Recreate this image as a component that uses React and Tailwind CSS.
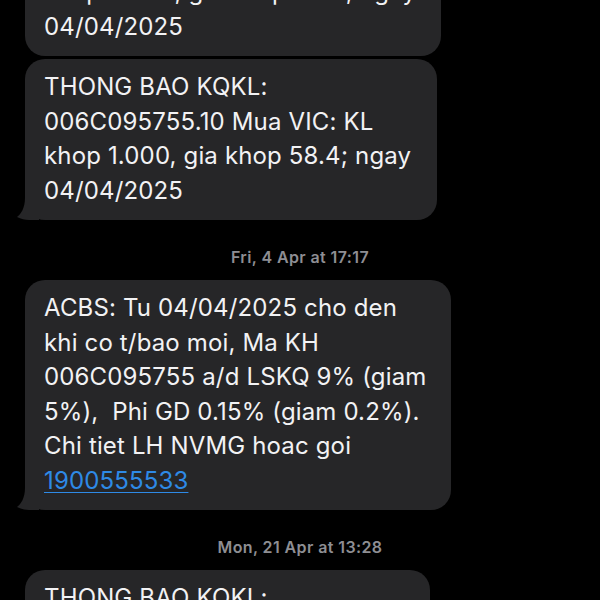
const Tail = () => (
  <svg
    className="absolute -left-[8px] bottom-0"
    width="26"
    height="22"
    viewBox="0 0 26 22"
  >
    <path d="M8 0 H22 V22 H12 C8 22 4 21 0 19 C4 16 8 10 8 0 Z" fill="#262628" />
  </svg>
);

const Bubble = ({ width, tail, children, className = '' }) => (
  <div
    className={`relative rounded-[20px] bg-[#262628] pl-[19px] pr-3 pt-[11px] pb-[12px] ${width} ${className}`}
  >
    <p className="relative z-10 text-[24px] leading-[34.5px] tracking-[0.15px] text-[#f2f2f4] whitespace-nowrap">
      {children}
    </p>
    {tail && <Tail />}
  </div>
);

const Stamp = ({ children }) => (
  <div className="mt-[27px] mb-[13px] text-center text-[16px] leading-[20px] font-semibold tracking-[0.4px] text-[#8e8e93]">
    {children}
  </div>
);

export default function App() {
  return (
    <div
      className="h-[600px] w-[600px] overflow-hidden bg-black pl-[25px]"
      style={{ fontFamily: 'Inter, "Liberation Sans", sans-serif' }}
    >
      <div className="flex flex-col items-start">
        <Bubble width="w-[416px]" className="mt-[-105px]">
          THONG BAO KQKL:
          <br />
          006C095755.10 Mua VIC: KL
          <br />
          khop 4.000, gia khop 58.4; ngay
          <br />
          04/04/2025
        </Bubble>
        <Bubble width="w-[412px]" className="mt-[3px]" tail>
          THONG BAO KQKL:
          <br />
          006C095755.10 Mua VIC: KL
          <br />
          khop 1.000, gia khop 58.4; ngay
          <br />
          04/04/2025
        </Bubble>

        <div className="w-[550px]">
          <Stamp>Fri, 4 Apr at 17:17</Stamp>
        </div>

        <Bubble width="w-[426px]" tail>
          ACBS: Tu 04/04/2025 cho den
          <br />
          khi co t/bao moi, Ma KH
          <br />
          006C095755 a/d LSKQ 9% (giam
          <br />
          5%),&nbsp; Phi GD 0.15% (giam 0.2%).
          <br />
          Chi tiet LH NVMG hoac goi
          <br />
          <a className="text-[#2e8ae6] underline decoration-1 underline-offset-[3px]">
            1900555533
          </a>
        </Bubble>

        <div className="w-[550px]">
          <Stamp>Mon, 21 Apr at 13:28</Stamp>
        </div>

        <Bubble width="w-[405px]">
          THONG BAO KQKL:
          <br />
          006C095755.10 Mua VIC: KL
        </Bubble>
      </div>
    </div>
  );
}
